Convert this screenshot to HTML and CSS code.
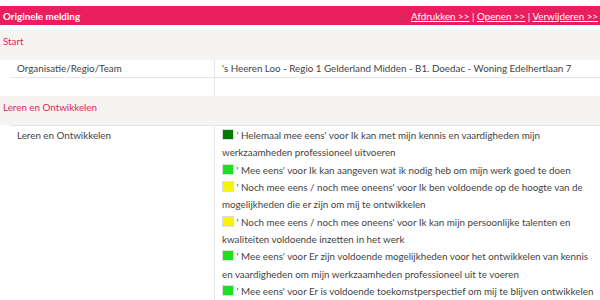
FILE: index.html
```html
<!DOCTYPE html>
<html lang="nl">
<head>
    <meta charset="UTF-8">
    <title>Originele melding</title>
    <link rel="stylesheet" href="styles.css">
</head>
<body>
    <div class="panel-header">
        <span class="panel-title">Originele melding</span>
        <span class="panel-actions">
            <a href="#">Afdrukken &gt;&gt;</a> | <a href="#">Openen &gt;&gt;</a> | <a href="#">Verwijderen &gt;&gt;</a>
        </span>
    </div>

    <div class="section">Start</div>
    <div class="row">
        <div class="label">Organisatie/Regio/Team</div>
        <div class="value">'s Heeren Loo - Regio 1 Gelderland Midden - B1. Doedac - Woning Edelhertlaan 7</div>
    </div>
    <div class="row row-empty">
        <div class="label"></div>
        <div class="value"></div>
    </div>

    <div class="section">Leren en Ontwikkelen</div>
    <div class="row row-last">
        <div class="label">Leren en Ontwikkelen</div>
        <div class="value">
            <div class="answer"><span class="box dark-green"></span> ' Helemaal mee eens' voor Ik kan met mijn kennis en vaardigheden mijn werkzaamheden professioneel uitvoeren</div>
            <div class="answer"><span class="box green"></span> ' Mee eens' voor Ik kan aangeven wat ik nodig heb om mijn werk goed te doen</div>
            <div class="answer"><span class="box yellow"></span> ' Noch mee eens / noch mee oneens' voor Ik ben voldoende op de hoogte van de mogelijkheden die er zijn om mij te ontwikkelen</div>
            <div class="answer"><span class="box yellow"></span> ' Noch mee eens / noch mee oneens' voor Ik kan mijn persoonlijke talenten en kwaliteiten voldoende inzetten in het werk</div>
            <div class="answer"><span class="box green"></span> ' Mee eens' voor Er zijn voldoende mogelijkheden voor het ontwikkelen van kennis en vaardigheden om mijn werkzaamheden professioneel uit te voeren</div>
            <div class="answer"><span class="box green"></span> ' Mee eens' voor Er is voldoende toekomstperspectief om mij te blijven ontwikkelen</div>
        </div>
    </div>
</body>
</html>
```
FILE: styles.css
```css
body {
    margin: 0;
    padding-top: 6px;
    font-family: Lato, "Open Sans", sans-serif;
    font-size: 9.8px;
    color: #444;
    background: #fff;
}
.panel-header {
    display: flex;
    justify-content: space-between;
    align-items: center;
    height: 19px;
    padding: 0 2px 0 3px;
    background-color: #e81e5e;
    color: #fff;
}
.panel-title {
    font-weight: bold;
}
.panel-actions a {
    color: #fff;
}
.section {
    margin-top: 5px;
    height: 30px;
    box-sizing: border-box;
    padding: 3px 3px 0;
    line-height: 17px;
    background-color: #f5f4f2;
    color: #d9285e;
}
.section + .section,
.row + .section {
    margin-top: 0;
    height: 29px;
}
.row {
    display: grid;
    grid-template-columns: 205px 1fr;
    margin-left: 10px;
    border-bottom: 1px solid #e6e6e6;
    line-height: 17px;
}
.row-empty {
    height: 18px;
    border-bottom: none;
}
.row-last {
    border-top: 1px solid #e6e6e6;
    border-bottom: none;
}
.label {
    padding: 0 7px;
    border-right: 1px solid #e6e6e6;
}
.value {
    padding: 0 2px 0 7px;
}
.row-last .label,
.row-last .value {
    padding-top: 1px;
    line-height: 17.33px;
}
.box {
    display: inline-block;
    width: 10px;
    height: 9px;
    border: 1px solid #ddd;
    vertical-align: -1px;
}
.dark-green {
    background-color: #007a00;
}
.green {
    background-color: #1fe01f;
}
.yellow {
    background-color: #f8f400;
}
```
